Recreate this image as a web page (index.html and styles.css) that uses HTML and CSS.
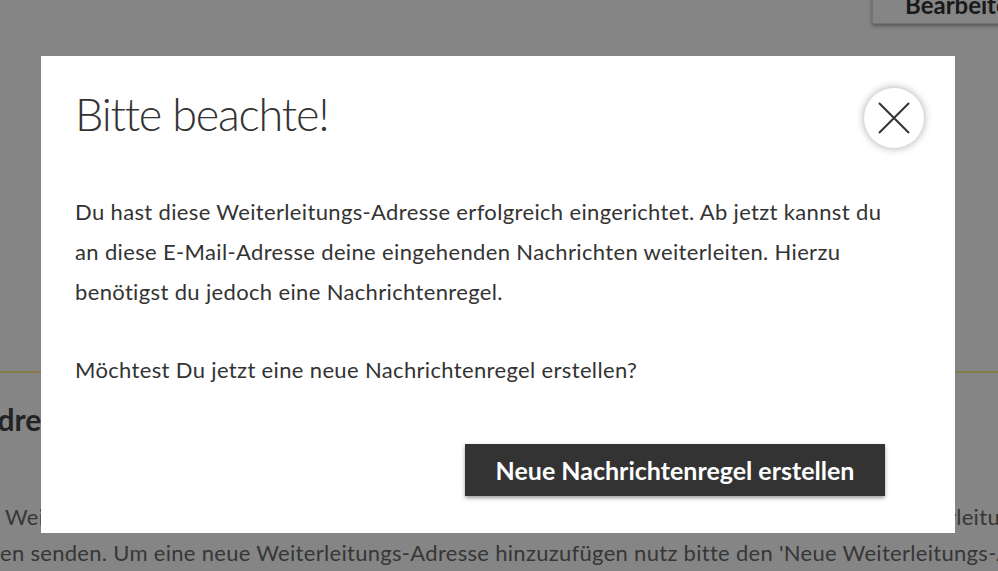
FILE: index.html
```html
<!DOCTYPE html>
<html lang="de">
<head>
    <meta charset="UTF-8">
    <meta name="viewport" content="width=device-width, initial-scale=1.0">
    <title>Weiterleitungs-Adressen</title>
    <link rel="stylesheet" href="styles.css">
</head>
<body>
    <div class="page">
        <div class="toolbar">
            <button class="edit-btn">Bearbeiten</button>
        </div>

        <div class="section">
            <h2 class="section-title">Adressen</h2>
            <div class="section-text">
                <div class="line first">Weiterleitungs-Adressen aufgelistet. An die hier hinterlegten E-Mail-Adressen kannst Du Weiterleitungen</div>
                <div class="line">en senden. Um eine neue Weiterleitungs-Adresse hinzuzufügen nutz bitte den 'Neue Weiterleitungs-Adresse' Button.</div>
            </div>
        </div>
    </div>

    <!-- Hinweis-Dialog -->
    <div class="overlay">
        <div class="modal">
            <button class="close-btn" aria-label="Schließen">
                <svg width="32" height="32" viewBox="0 0 32 32">
                    <path d="M1 1 L31 31 M31 1 L1 31" stroke="#333" stroke-width="2" fill="none"/>
                </svg>
            </button>

            <h1 class="modal-title">Bitte beachte!</h1>

            <p class="modal-text">Du hast diese Weiterleitungs-Adresse erfolgreich eingerichtet. Ab jetzt kannst du an diese E-Mail-Adresse deine eingehenden Nachrichten weiterleiten. Hierzu benötigst du jedoch eine Nachrichtenregel.</p>

            <p class="modal-text">Möchtest Du jetzt eine neue Nachrichtenregel erstellen?</p>

            <div class="modal-actions">
                <button class="btn">Neue Nachrichtenregel erstellen</button>
            </div>
        </div>
    </div>
</body>
</html>
```

FILE: styles.css
```css
body {
    font-family: Lato, "Liberation Sans", sans-serif;
    margin: 0;
    padding: 0;
    background-color: #fff;
    color: #333;
    overflow: hidden;
    height: 571px;
}
.page {
    width: 100%;
}
.toolbar {
    display: flex;
    justify-content: flex-end;
    margin-top: -30px;
}
.edit-btn {
    width: 160px;
    height: 54px;
    margin-right: -34px;
    padding: 0 0 0 32px;
    text-align: left;
    background-color: #fff;
    border: 1px solid #ddd;
    box-shadow: 0 2px 4px rgba(0, 0, 0, 0.35);
    font-family: Lato, sans-serif;
    font-weight: 700;
    font-size: 24px;
    color: #333;
    line-height: 68px;
    overflow: hidden;
}
.section {
    margin-top: 347px;
    border-top: 2px solid #ffea88;
}
.section-title {
    margin: 28px 0 0 -23px;
    font-size: 30px;
    font-weight: 700;
    color: #444;
    white-space: nowrap;
}
.section-text {
    margin-top: 62px;
    font-size: 22px;
    letter-spacing: 0.3px;
    line-height: 36px;
    color: #6a6a6a;
    white-space: nowrap;
}
.line.first {
    padding-left: 5px;
}
.overlay {
    position: fixed;
    inset: 0;
    background-color: rgba(0, 0, 0, 0.48);
}
.modal {
    position: relative;
    width: 914px;
    margin: 56px 0 0 41px;
    padding: 31px 70px 37px 34px;
    box-sizing: border-box;
    background-color: #fff;
}
.close-btn {
    position: absolute;
    top: 32px;
    right: 31px;
    width: 60px;
    height: 60px;
    padding: 0;
    border: none;
    border-radius: 50%;
    background-color: #fff;
    box-shadow: 0 0 8px rgba(0, 0, 0, 0.35);
    display: flex;
    align-items: center;
    justify-content: center;
    cursor: pointer;
}
.modal-title {
    margin: 0 0 50px;
    font-size: 45px;
    font-weight: 300;
    letter-spacing: -1.2px;
    line-height: 55px;
    color: #333;
}
.modal-text {
    margin: 0 0 38px;
    font-size: 22px;
    letter-spacing: 0.35px;
    line-height: 40px;
    color: #333;
}
.modal-actions {
    display: flex;
    justify-content: flex-end;
    margin-top: 54px;
}
.btn {
    width: 420px;
    height: 52px;
    background-color: #333;
    color: #fff;
    border: none;
    box-shadow: 0 2px 4px rgba(0, 0, 0, 0.4);
    font-family: Lato, sans-serif;
    font-weight: 700;
    font-size: 25px;
    cursor: pointer;
}
```
